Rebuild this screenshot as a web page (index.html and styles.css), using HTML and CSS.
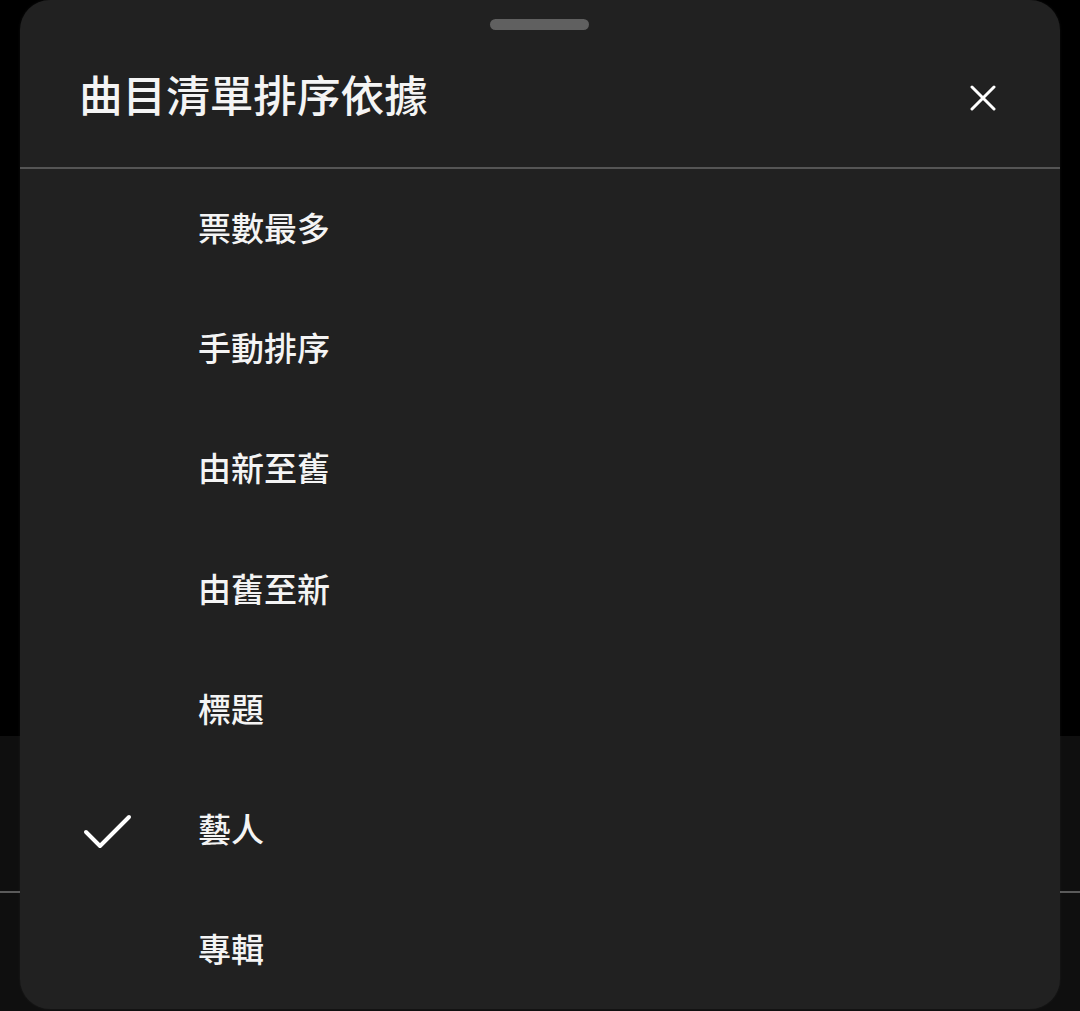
FILE: index.html
```html
<!DOCTYPE html>
<html lang="zh-Hant">
<head>
<meta charset="utf-8">
<link rel="stylesheet" href="styles.css">
</head>
<body>
<div class="backdrop">
  <div class="bd-top"></div>
  <div class="bd-bottom">
    <div class="bd-line"></div>
  </div>
</div>
<div class="sheet">
  <div class="handle"></div>
  <div class="header">
    <h1 class="title">曲目清單排序依據</h1>
    <button class="close" aria-label="關閉">
      <svg width="26" height="26" viewBox="0 0 26 26"><path d="M2 2 L24 24 M24 2 L2 24" stroke="#fff" stroke-width="3" stroke-linecap="round" fill="none"/></svg>
    </button>
  </div>
  <div class="divider"></div>
  <ul class="list">
    <li class="item"><span class="check"></span><span class="label">票數最多</span></li>
    <li class="item"><span class="check"></span><span class="label">手動排序</span></li>
    <li class="item"><span class="check"></span><span class="label">由新至舊</span></li>
    <li class="item"><span class="check"></span><span class="label">由舊至新</span></li>
    <li class="item"><span class="check"></span><span class="label">標題</span></li>
    <li class="item"><span class="check"><svg width="50" height="40" viewBox="0 0 50 40"><path d="M3 21 L17 35 L46 6" stroke="#fff" stroke-width="4" stroke-linecap="round" stroke-linejoin="round" fill="none"/></svg></span><span class="label">藝人</span></li>
    <li class="item"><span class="check"></span><span class="label">專輯</span></li>
  </ul>
</div>
</body>
</html>
```

FILE: styles.css
```css
html, body {
  margin: 0;
  padding: 0;
  background: #000;
  width: 1080px;
  height: 1011px;
  overflow: hidden;
  font-family: "Noto Sans CJK TC", "Noto Sans", sans-serif;
}

.backdrop {
  display: flex;
  flex-direction: column;
  height: 1011px;
}

.bd-top {
  height: 736px;
  background: #000;
}

.bd-bottom {
  flex: 1;
  background: #0f0f0f;
  padding-top: 155px;
}

.bd-line {
  height: 2px;
  background: #5a5a5a;
}

.sheet {
  position: absolute;
  left: 20px;
  top: 0;
  width: 1040px;
  height: 1009px;
  background: #212121;
  border-radius: 30px;
  overflow: hidden;
  box-shadow: 0 0 3px rgba(255,255,255,0.06);
}

.handle {
  position: absolute;
  left: 470px;
  top: 19px;
  width: 99px;
  height: 11px;
  border-radius: 6px;
  background: #606060;
}

.header {
  height: 167px;
  display: flex;
  align-items: center;
  padding: 0 60px 0 59px;
  box-sizing: border-box;
  padding-top: 30px;
}

.title {
  margin: 0;
  flex: 1;
  color: #f4f4f4;
  font-size: 43.6px;
  font-weight: 500;
  line-height: 1;
  letter-spacing: 0;
  position: relative;
  top: -5px;
}

.close {
  width: 34px;
  height: 34px;
  border: 0;
  padding: 0;
  background: transparent;
  display: flex;
  align-items: center;
  justify-content: center;
  position: relative;
  top: -1px;
}

.divider {
  height: 2px;
  background: #555;
}

.list {
  list-style: none;
  margin: 0;
  padding: 0;
}

.item {
  height: 120.3px;
  display: flex;
  align-items: center;
}

.check {
  width: 178px;
  padding-left: 63px;
  box-sizing: border-box;
  display: flex;
  align-items: center;
}

.label {
  color: #f4f4f4;
  font-size: 33px;
  font-weight: 500;
  line-height: 1;
  position: relative;
  top: -2px;
}
```
